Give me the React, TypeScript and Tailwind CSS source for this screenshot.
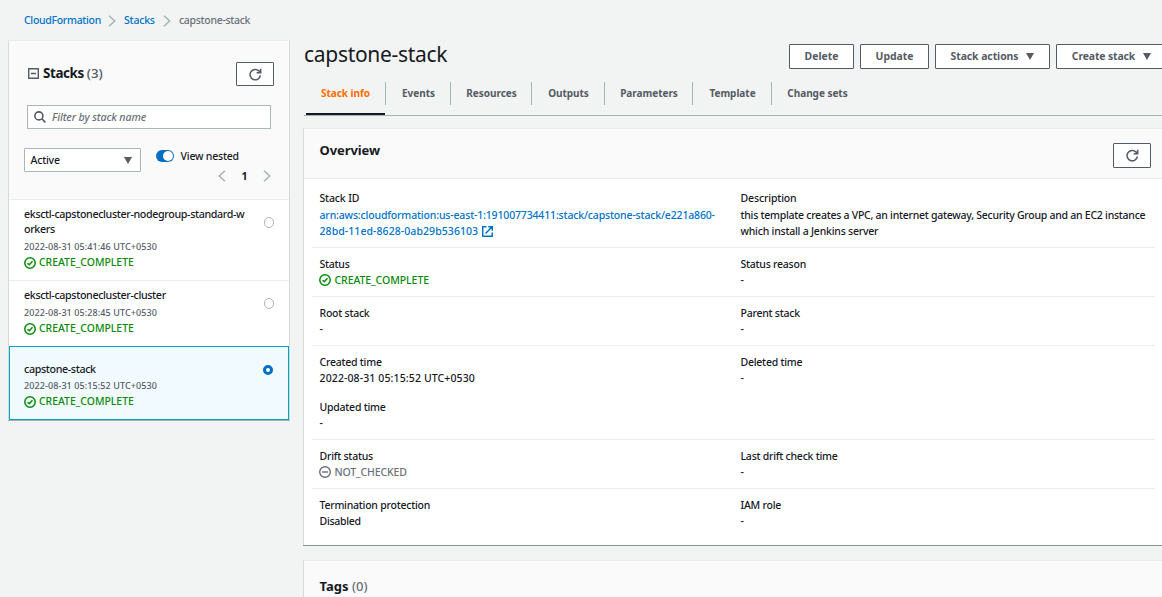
import type { ReactNode } from "react";

function CheckCircle() {
  return (
    <svg className="h-3 w-3 shrink-0" viewBox="0 0 12 12" fill="none" stroke="currentColor" strokeWidth="1.5">
      <circle cx="6" cy="6" r="5.2" />
      <path d="M3.5 6.2 5.3 7.8 8.5 4.3" />
    </svg>
  );
}

function MinusCircle() {
  return (
    <svg className="h-3 w-3 shrink-0" viewBox="0 0 12 12" fill="none" stroke="currentColor" strokeWidth="1.4">
      <circle cx="6" cy="6" r="5.3" />
      <path d="M3 6h6" />
    </svg>
  );
}

function Chevron({ left = false }: { left?: boolean }) {
  return (
    <svg className="h-3 w-2 shrink-0" viewBox="0 0 8 12" fill="none" stroke="#a3b5b5" strokeWidth="1.5">
      <path d={left ? "M7 0.8 1.3 6 7 11.2" : "M1 0.8 6.7 6 1 11.2"} />
    </svg>
  );
}

function Caret() {
  return (
    <svg className="h-[7px] w-2 shrink-0" viewBox="0 0 8 7" fill="#545b64">
      <path d="M0 0h8L4 7z" />
    </svg>
  );
}

function RefreshButton({ className }: { className: string }) {
  return (
    <button
      className={`flex w-[38px] shrink-0 items-center justify-center rounded-[1px] border border-[#545b64] bg-white ${className}`}
    >
      <svg className="h-[13px] w-[13px]" viewBox="0 0 13 13" fill="none" stroke="#545b64" strokeWidth="1.5">
        <path d="M11.4 7.4A5.2 5.2 0 1 1 9.9 2.9L11.4 4.4" />
        <path d="M11.7 0.8v3.9H7.6" />
      </svg>
    </button>
  );
}

function StackItem({ name, time, selected = false }: { name: ReactNode; time: string; selected?: boolean }) {
  return (
    <li
      className={
        selected
          ? "-mt-px flex h-[74px] border border-[#00a1c9] bg-[#f1faff] pt-[15px] pr-[15px] pl-[14px]"
          : "flex border-b border-[#eaeded] pt-[7px] pr-[14px] pb-[10px] pl-[15px]"
      }
    >
      <div className="min-w-0 flex-1">
        <div className="text-[10.7px] leading-[15px] tracking-[-0.36px] whitespace-nowrap">{name}</div>
        <div className={`text-[9px] leading-[15px] tracking-[0.09px] text-[#545b64] ${selected ? "mt-px" : "mt-[2px]"}`}>{time}</div>
        <div className="relative top-px flex h-4 items-center gap-[3px] text-[10.4px] tracking-[0.02px] text-[#078a07]">
          <CheckCircle />
          CREATE_COMPLETE
        </div>
      </div>
      {selected ? (
        <span className="mt-[3px] h-[10px] w-[10px] rounded-full border-[3px] border-[#0070c4] bg-white" />
      ) : (
        <span className="mt-[10px] mr-px h-[11px] w-[10px] rounded-full border border-[#aab7b8] bg-white" />
      )}
    </li>
  );
}

function Field({ label, children }: { label: string; children: ReactNode }) {
  return (
    <div>
      <div className="leading-4 tracking-[-0.24px]">{label}</div>
      <div className="leading-4">{children}</div>
    </div>
  );
}

function Row({ children }: { children: ReactNode }) {
  return <div className="grid grid-cols-[421px_1fr] border-t border-[#eaeded] py-2 pl-[7.5px]">{children}</div>;
}

function ActionButton({ className, children }: { className: string; children: ReactNode }) {
  return (
    <button
      className={`flex h-[25px] shrink-0 items-center justify-center gap-2 rounded-[1px] border border-[#545b64] bg-white text-[10.4px] font-bold whitespace-nowrap text-[#545b64] ${className}`}
    >
      {children}
    </button>
  );
}

const tabs = [
  { label: "Stack info", width: "w-[80px]" },
  { label: "Events", width: "w-[65px]" },
  { label: "Resources", width: "w-[81px]" },
  { label: "Outputs", width: "w-[73px]" },
  { label: "Parameters", width: "w-[88px]" },
  { label: "Template", width: "w-[79px]" },
  { label: "Change sets", width: "w-[91px]" },
];

export default function App() {
  return (
    <div className="h-[597px] w-[1162px] overflow-hidden bg-[#f2f3f3] font-['Noto_Sans',sans-serif] text-[10.5px] font-medium text-[#16191f]">
      <nav className="flex h-10 items-center gap-2 pt-px pl-6 text-[10.5px] tracking-[-0.3px] text-[#0073c7]">
        <a className="w-[76px] whitespace-nowrap">CloudFormation</a>
        <Chevron />
        <a className="w-[31px] tracking-[-0.2px]">Stacks</a>
        <Chevron />
        <span className="text-[#687078]">capstone-stack</span>
      </nav>

      <div className="flex items-start">
        <aside className="ml-2 w-[282px] shrink-0 border border-b-0 border-[#d5dbdb] border-t-[#eaeded] bg-white shadow-[0_1px_0_#a5b0b5]">
          <div className="h-[159px] border-b border-[#eaeded] bg-[#fafafa]">
            <div className="flex items-start justify-between pt-[21px] pr-[15px] pl-[19px]">
              <h2 className="flex items-center text-[13px] leading-[22px]">
                <svg className="mt-px mr-1 h-[11px] w-[11px]" viewBox="0 0 11 11" fill="none" stroke="#545b64" strokeWidth="1.4">
                  <path d="M.7.7h9.6v9.6H.7zM3 5.5h5" />
                </svg>
                <b className="text-[13.4px] tracking-[-0.4px]">Stacks</b>
                <span className="ml-[3px] text-[13.4px] text-[#545b64]">(3)</span>
              </h2>
              <RefreshButton className="h-6" />
            </div>
            <div className="mt-[19px] mr-[18px] ml-[18px] flex h-6 items-center border border-[#aab7b8] bg-white pl-[5.5px]">
              <svg className="h-3 w-3" viewBox="0 0 12 12" fill="none" stroke="#545b64" strokeWidth="1.6">
                <circle cx="4.9" cy="4.9" r="4" />
                <path d="m7.8 7.8 3.6 3.6" />
              </svg>
              <span className="mt-px ml-[6.5px] text-[10.6px] tracking-[-0.09px] text-[#687078] italic">Filter by stack name</span>
            </div>
            <div className="mt-[19px] flex pl-[15px]">
              <div className="flex h-6 w-[117px] items-center justify-between rounded-[1px] border border-[#aab7b8] bg-white pr-2 pl-[5.5px]">
                <span className="mt-px tracking-[-0.2px]">Active</span>
                <Caret />
              </div>
              <div className="ml-[15px] flex-1">
                <div className="flex h-4 items-center">
                  <span className="flex h-3 w-[18px] items-center justify-end rounded-full bg-[#0070c4] pr-px">
                    <span className="h-[10px] w-[10px] rounded-full bg-white" />
                  </span>
                  <span className="mt-[2px] ml-[6.5px] tracking-[-0.2px]">View nested</span>
                </div>
                <div className="mt-1 flex h-4 items-center justify-end pr-[18.5px]">
                  <Chevron left />
                  <b className="mx-[15px] mt-px">1</b>
                  <Chevron />
                </div>
              </div>
            </div>
          </div>
          <ul>
            <StackItem
              name={
                <>
                  eksctl-capstonecluster-nodegroup-standard-w
                  <br />
                  orkers
                </>
              }
              time="2022-08-31 05:41:46 UTC+0530"
            />
            <StackItem name="eksctl-capstonecluster-cluster" time="2022-08-31 05:28:45 UTC+0530" />
            <StackItem name="capstone-stack" time="2022-08-31 05:15:52 UTC+0530" selected />
          </ul>
        </aside>

        <main className="ml-[13px] w-[859px] shrink-0">
          <div className="flex h-[42px] items-start pt-[4px]">
            <h1 className="-mt-px ml-px flex-1 text-[21px] leading-[22px] font-normal tracking-[-0.3px]">capstone-stack</h1>
            <div className="-mr-[7px] flex gap-[6px]">
              <ActionButton className="w-[65px]">Delete</ActionButton>
              <ActionButton className="w-[69px]">Update</ActionButton>
              <ActionButton className="w-[115px]">
                <span className="tracking-[-0.05px]">Stack actions</span> <Caret />
              </ActionButton>
              <ActionButton className="w-[113px] pr-[2px]">
                <span className="tracking-[-0.12px]">Create stack</span> <Caret />
              </ActionButton>
            </div>
          </div>
          <div className="ml-px flex h-[34px] border-b border-[#a3b5b5] pl-[2px] text-[10px] font-bold text-[#545b64]">
            {tabs.map((tab, i) => (
              <div
                key={tab.label}
                className={`flex shrink-0 flex-col ${tab.width} ${i === 0 ? "text-[#fa6f00]" : ""}`}
              >
                <div
                  className={`flex h-[23px] items-center justify-center whitespace-nowrap ${
                    i === 0 ? "border-r border-[#a3b5b5]" : i < 6 ? "border-r border-[#a3b5b5] pl-px" : ""
                  }`}
                >
                  <span className="tracking-[-0.03px]">{tab.label}</span>
                </div>
                {i === 0 && <div className="mt-2 mr-px h-[2px] bg-[#16191f]" />}
              </div>
            ))}
          </div>

          <section className="mt-3 h-[417px] border-t border-l border-[#d5dbdb] border-t-[#eaeded] bg-white shadow-[0_1px_0_#879596]">
            <header className="flex h-[49px] items-start justify-between bg-[#fafafa] pr-[11px] pl-[15.5px]">
              <h2 className="mt-[11px] text-[13px] leading-5 font-bold tracking-[-0.08px]">Overview</h2>
              <div className="mt-[14px]">
                <RefreshButton className="h-[25px]" />
              </div>
            </header>
            <div className="h-px bg-[#eaeded]" />
            <div className="mr-[7px] ml-2">
              <div className="grid grid-cols-[421px_1fr] pt-[11px] pb-2 pl-[7.5px]">
                <div>
                  <div className="mb-px leading-4 tracking-[-0.15px]">Stack ID</div>
                  <div className="leading-4 tracking-[-0.16px] whitespace-nowrap text-[#0073c7]">
                    arn:aws:cloudformation:us-east-1:191007734411:stack/capstone-stack/e221a860-
                    <br />
                    <span className="flex items-center tracking-[0.07px]">
                      28bd-11ed-8628-0ab29b536103
                      <svg className="ml-[3.5px] h-[11px] w-[11px]" viewBox="0 0 11 11" fill="none" stroke="currentColor" strokeWidth="1.5">
                        <path d="M4.5.8H.7v9.5h9.5V6.5M6.2.7h4.1v4.1M10.2.8 3.5 7.5" />
                      </svg>
                    </span>
                  </div>
                </div>
                <div>
                  <div className="mb-px leading-4 tracking-[-0.14px]">Description</div>
                  <div className="leading-4 tracking-[-0.26px] whitespace-nowrap">
                    this template creates a VPC, an internet gateway, Security Group and an EC2 instance
                    <br />
                    <span className="tracking-[-0.22px]">which install a Jenkins server</span>
                  </div>
                </div>
              </div>
              <Row>
                <Field label="Status">
                  <span className="-ml-[0.5px] flex items-center gap-[3.5px] tracking-[-0.07px] text-[#078a07]">
                    <CheckCircle />
                    CREATE_COMPLETE
                  </span>
                </Field>
                <Field label="Status reason">-</Field>
              </Row>
              <Row>
                <Field label="Root stack">-</Field>
                <Field label="Parent stack">-</Field>
              </Row>
              <Row>
                <div className="flex flex-col gap-[13px]">
                  <Field label="Created time">
                    <span className="tracking-[0.12px]">2022-08-31 05:15:52 UTC+0530</span>
                  </Field>
                  <Field label="Updated time">-</Field>
                </div>
                <Field label="Deleted time">-</Field>
              </Row>
              <Row>
                <Field label="Drift status">
                  <span className="-ml-[0.5px] flex items-center gap-[3.5px] tracking-[-0.14px] text-[#687078]">
                    <MinusCircle />
                    NOT_CHECKED
                  </span>
                </Field>
                <Field label="Last drift check time">-</Field>
              </Row>
              <Row>
                <Field label="Termination protection">
                  <span className="tracking-[-0.3px]">Disabled</span>
                </Field>
                <Field label="IAM role">-</Field>
              </Row>
            </div>
          </section>

          <section className="mt-[15px] h-20 border-t border-l border-[#d5dbdb] border-t-[#eaeded] bg-[#fafafa] pt-[15px] pl-[15.5px]">
            <h2 className="text-[13px] leading-5">
              <b>Tags</b> <span className="text-[#687078]">(0)</span>
            </h2>
          </section>
        </main>
      </div>
    </div>
  );
}
